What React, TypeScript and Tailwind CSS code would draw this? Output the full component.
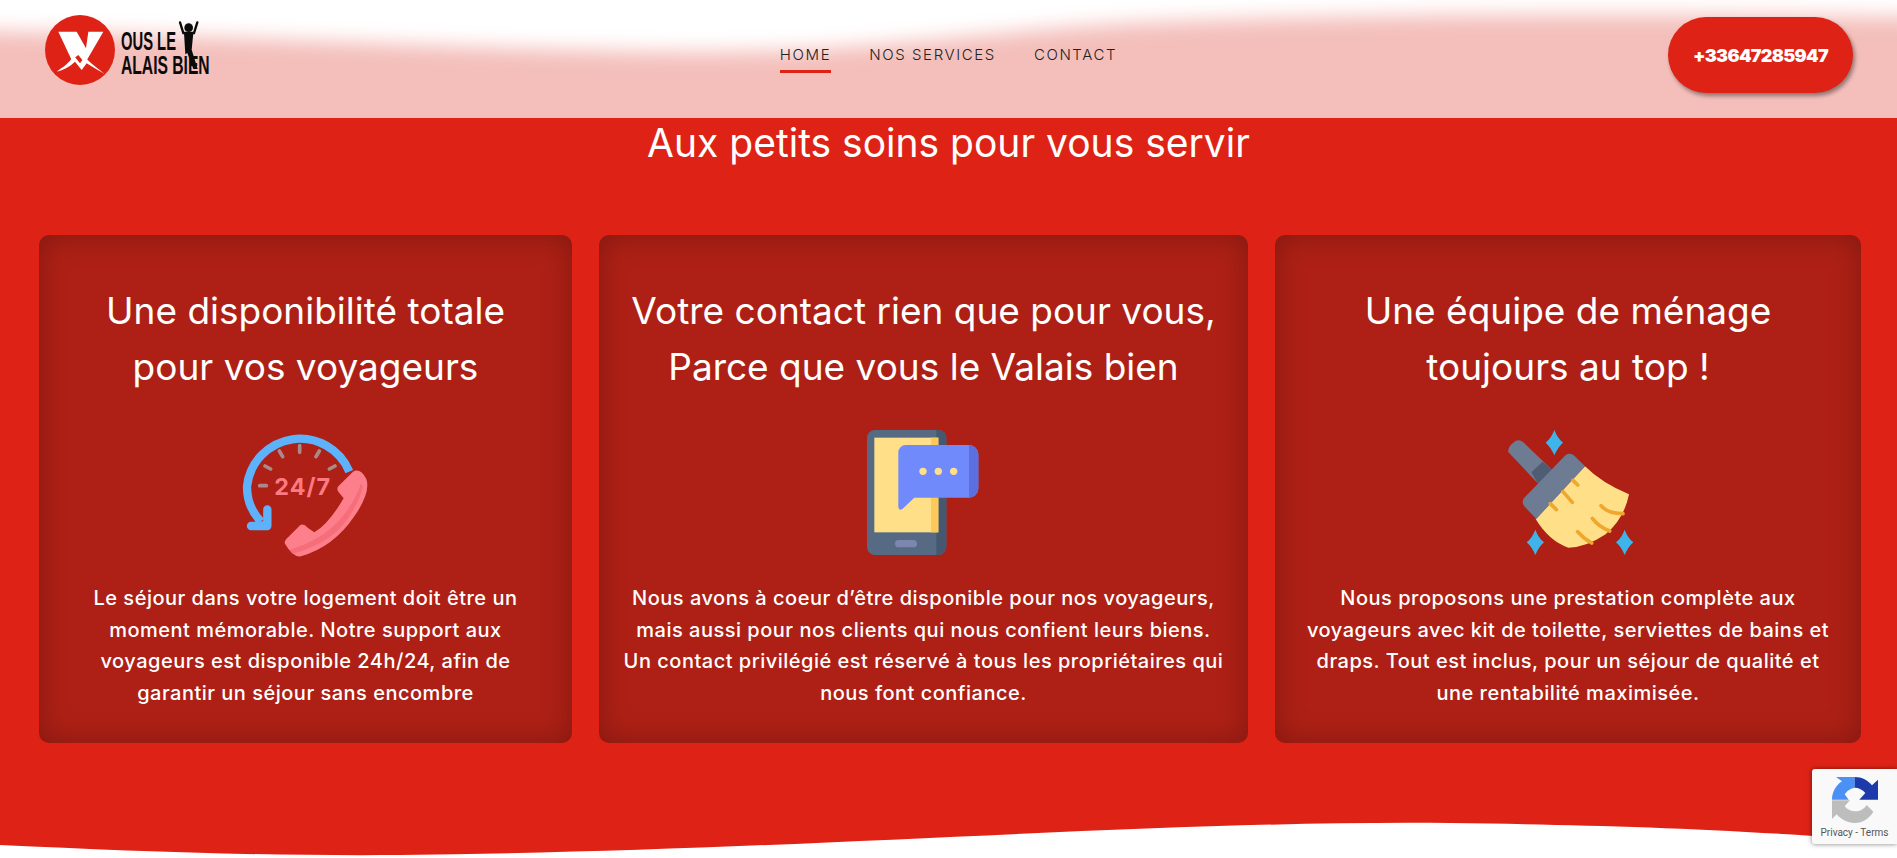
const cards = [
  {
    title: ['Une disponibilité totale', 'pour vos voyageurs'],
    icon: <PhoneClockIcon />,
    body: [
      'Le séjour dans votre logement doit être un',
      'moment mémorable. Notre support aux',
      'voyageurs est disponible 24h/24, afin de',
      'garantir un séjour sans encombre',
    ],
  },
  {
    title: ['Votre contact rien que pour vous,', 'Parce que vous le Valais bien'],
    icon: <MobileChatIcon />,
    body: [
      'Nous avons à coeur d’être disponible pour nos voyageurs,',
      'mais aussi pour nos clients qui nous confient leurs biens.',
      'Un contact privilégié est réservé à tous les propriétaires qui',
      'nous font confiance.',
    ],
  },
  {
    title: ['Une équipe de ménage', 'toujours au top !'],
    icon: <BroomIcon />,
    body: [
      'Nous proposons une prestation complète aux',
      'voyageurs avec kit de toilette, serviettes de bains et',
      'draps. Tout est inclus, pour un séjour de qualité et',
      'une rentabilité maximisée.',
    ],
  },
];

function Logo() {
  return (
    <svg viewBox="0 0 630 270" className="block h-[90px] w-[210px]">
      <circle cx="180" cy="135" r="105" fill="#de2316" />
      <path d="M115 80H170L198 130L205 80H250L195 175L175 150L155 165Z" fill="#fff" />
      <path d="M110 200C130 185 150 175 160 150L180 175L195 155C210 175 235 190 255 208C235 195 215 185 200 175L185 195L165 170C150 185 130 195 110 200Z" fill="#fff" />
      <text x="303" y="135" textLength="165" lengthAdjust="spacingAndGlyphs" fontFamily="Liberation Sans" fontWeight="700" fontSize="76" fill="#0b0b0b">OUS LE</text>
      <text x="303" y="207" textLength="266" lengthAdjust="spacingAndGlyphs" fontFamily="Liberation Sans" fontWeight="700" fontSize="76" fill="#0b0b0b">ALAIS BIEN</text>
      <circle cx="506" cy="68" r="13" fill="#0b0b0b" />
      <path d="M480 52l10 32h32l10-32" fill="none" stroke="#0b0b0b" strokeWidth="7" strokeLinecap="round" />
      <path d="M492 84h28l-5 50 18 58h-13l-18-48-6 4z" fill="#0b0b0b" />
    </svg>
  );
}

function PhoneClockIcon() {
  return (
    <svg viewBox="0 0 510 450" className="h-[150px] w-[170px]">
      <path d="M385 170A160 160 0 0 0 78 215c0 42 16 78 42 105" fill="none" stroke="#5db2fb" strokeWidth="25" />
      <path d="M90 333h49v-50" fill="none" stroke="#5db2fb" strokeWidth="25" strokeLinecap="round" strokeLinejoin="round" />
      <path d="M120 320l19 13v-20z" fill="#5db2fb" />
      <g stroke="#a98a8a" strokeWidth="11" strokeLinecap="round" fill="none">
        <path d="M236 92v20M175 108l10 17M295 108l-10 17M132 153l17 9M342 153l-17 9M116 212h20" />
      </g>
      <text x="245" y="240" textAnchor="middle" fontFamily="Inter" fontWeight="700" fontSize="70" letterSpacing="3" fill="#fb7b85">24/7</text>
      <path d="M352 214l44-44q22-12 40 22 14 40-36 112-62 92-160 120-24 4-48-38-4-8 10-20l36-36q10-6 22 8l20 14q42-24 88-102l-16-20q-6-8 0-16z" fill="#fd7f8b" />
      <path d="M425 215q-10 50-55 110-50 62-155 92l-10-12q100-30 155-95 45-55 60-105z" fill="#f0636e" opacity=".6" />
    </svg>
  );
}

function MobileChatIcon() {
  return (
    <svg viewBox="0 0 450 450" className="h-[150px] w-[150px]">
      <rect x="54" y="45" width="238" height="375" rx="24" fill="#566a84" />
      <path d="M262 45h6a24 24 0 0 1 24 24v327a24 24 0 0 1-24 24h-6z" fill="#46586f" />
      <rect x="76" y="68" width="192" height="284" fill="#ffe088" />
      <rect x="246" y="68" width="22" height="284" fill="#fdc95a" />
      <rect x="138" y="375" width="66" height="22" rx="11" fill="#7c86ae" />
      <path d="M170 90h190a28 28 0 0 1 28 28v102a28 28 0 0 1-28 28H196l-36 34q-10 6-12-6V112a22 22 0 0 1 22-22z" fill="#7089fb" />
      <path d="M360 90a28 28 0 0 1 28 28v102a28 28 0 0 1-28 28v0-158z" fill="#5c6fe0" />
      <circle cx="222" cy="169" r="11" fill="#ffe088" />
      <circle cx="268" cy="169" r="11" fill="#ffe088" />
      <circle cx="314" cy="169" r="11" fill="#ffe088" />
    </svg>
  );
}

function BroomIcon() {
  const star = (x: number, y: number) => `M${x} ${y - 38}q10 26 26 38q-16 14-26 38q-10-24-26-38q16-12 26-38z`;
  return (
    <svg viewBox="0 0 450 450" className="h-[150px] w-[150px]">
      <path d={star(184, 83)} fill="#3fb4ea" />
      <path d={star(127, 382)} fill="#3fb4ea" />
      <path d={star(395, 382)} fill="#3fb4ea" />
      <path d="M45 110q0-10 8-20l14-12q12-6 22 2l88 84-40 44z" fill="#6d7c93" />
      <path d="M115 172l34-32 28 24-42 42z" fill="#4f5c74" />
      <path d="M128 312l148-158q50 50 132 84-14 72-70 120-60 40-112 40-58-20-98-86z" fill="#ffe088" />
      <path d="M94 248L218 120q14-8 26 2l32 32-146 158-36-38q-10-14 0-26z" fill="#6d7c93" />
      <g stroke="#eea72f" strokeWidth="11" strokeLinecap="round" fill="none">
        <path d="M172 266l18 18M210 230l28 32M240 196l14 14M324 272q20 24 66 24M298 310q20 26 52 38M254 350q20 22 42 34" />
      </g>
    </svg>
  );
}

function RecaptchaBadge() {
  return (
    <div className="absolute bottom-[14px] right-0 flex h-[75px] w-[85px] flex-col items-center rounded-l-[3px] bg-[#f9f9f9] pt-2 shadow-[0_0_5px_rgba(0,0,0,0.5)]">
      <svg viewBox="0 0 138 138" className="h-[46px] w-[46px] shrink-0">
        <path d="M0 68C0 45 12 25 30 13L12 0H68V32C52 34 42 46 38 52L50 68H0Z" fill="#4a90f5" />
        <path d="M68 0C90 0 108 10 120 25L138 8V68H82L100 48C92 38 80 32 68 32Z" fill="#1c3aa9" />
        <path d="M0 70H54L38 88C46 98 58 103 70 103C84 103 96 96 104 84L124 104C112 124 92 138 68 138C46 138 28 128 14 112L0 126Z" fill="#bdbdbd" />
      </svg>
      <div className="mt-[4px] whitespace-nowrap font-['Roboto',sans-serif] text-[10px] leading-[12px] text-[#555]">Privacy - Terms</div>
    </div>
  );
}

export default function App() {
  return (
    <div className="relative h-[858px] overflow-hidden bg-white font-['Inter',sans-serif]">
      <header className="relative grid h-[118px] grid-cols-[1fr_auto_1fr] overflow-hidden bg-[#f4bfbb]">
        <svg viewBox="0 0 1897 118" className="absolute inset-0 h-full w-full overflow-visible blur-[10px]" preserveAspectRatio="none">
          <path d="M-100 -100H2000V18C1600 12 1300 14 1100 25C950 36 850 52 700 52C450 50 200 32 -100 30Z" fill="#fff" />
        </svg>
        <div className="relative pl-5 pt-[5px]">
          <Logo />
        </div>
        <nav className="relative flex gap-[38px] pt-[45px] text-[15px] font-light uppercase leading-[20px] tracking-[1.6px] text-[#222]">
          <a className="h-[28px] border-b-[3px] border-[#de2316]">Home</a>
          <a>Nos services</a>
          <a>Contact</a>
        </nav>
        <div className="relative flex justify-end pr-[44px] pt-[17px]">
          <a className="flex h-[76px] w-[185px] items-center justify-center rounded-[38px] bg-[#de2316] text-[18px] font-black tracking-[-0.7px] text-white shadow-[2px_3px_4px_rgba(0,0,0,0.4)]">+33647285947</a>
        </div>
      </header>

      <main className="relative h-[740px] bg-[#de2316] pt-[2px] text-white">
        <h1 className="text-center text-[39px] font-normal leading-[46px]">Aux petits soins pour vous servir</h1>
        <div className="mt-[69px] grid grid-cols-[533px_649px_586px] gap-[27px] pl-[39px]">
          {cards.map((card) => (
            <section key={card.title[0]} className="flex h-[508px] flex-col items-center rounded-[10px] bg-[#ae2015] pt-[48px] text-center shadow-[inset_0_0_30px_rgba(0,0,0,0.25)]">
              <h2 className="text-[37px] font-normal leading-[56px]">
                {card.title.map((line) => (
                  <div key={line}>{line}</div>
                ))}
              </h2>
              <div className="mt-5">{card.icon}</div>
              <div className="mt-[18px] text-[20px] font-medium leading-[31.5px] tracking-[0.5px]">
                {card.body.map((line) => (
                  <div key={line} className="whitespace-nowrap">{line}</div>
                ))}
              </div>
            </section>
          ))}
        </div>
        <svg viewBox="0 0 1897 40" className="absolute bottom-0 left-0 h-[40px] w-full" preserveAspectRatio="none">
          <path d="M0 27C130 33 250 38 400 37C800 33 1150 2 1450 5C1600 7 1720 10 1897 24V40H0Z" fill="#fff" />
        </svg>
      </main>

      <RecaptchaBadge />
    </div>
  );
}
